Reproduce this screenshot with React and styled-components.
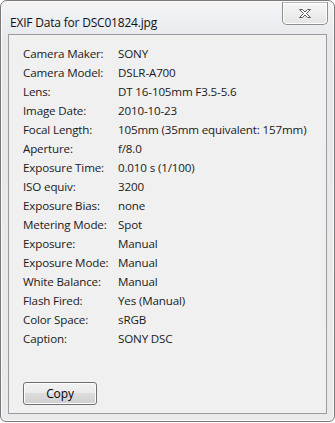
import React from 'react';
import styled, { createGlobalStyle } from 'styled-components';

const Global = createGlobalStyle`
  html, body {
    margin: 0;
    padding: 0;
    background: #ffffff;
  }
  body {
    font-family: "Segoe UI", "Open Sans", "Noto Sans", sans-serif;
    font-size: 11.6px;
    letter-spacing: -0.15px;
    color: #000;
  }
`;

const Window = styled.div`
  width: 335px;
  height: 422px;
  box-sizing: border-box;
  border: 1px solid #7a7a7a;
  border-radius: 7px 7px 6px 6px;
  background: linear-gradient(#f4f5f7, #e6e8eb 40px, #e9eaec);
  box-shadow: inset 0 0 0 1px #fbfbfb;
  display: flex;
  flex-direction: column;
  padding: 0 7px 7px 7px;
`;

const TitleBar = styled.div`
  height: 33px;
  display: flex;
  align-items: flex-start;
  flex-shrink: 0;
`;

const Title = styled.div`
  padding: 13px 0 0 2px;
  font-size: 12px;
  letter-spacing: -0.2px;
  color: #111;
`;

const CloseButton = styled.div`
  margin-left: auto;
  margin-right: -1px;
  margin-top: 1px;
  width: 46px;
  height: 23px;
  box-sizing: border-box;
  border: 1px solid #8e8e8e;
  border-top-color: #b8b8b8;
  border-radius: 0 0 5px 5px;
  background: linear-gradient(#f7f7f7, #e4e4e4);
  box-shadow: inset 0 0 0 1px #ffffff;
  display: flex;
  align-items: center;
  justify-content: center;
`;

const Client = styled.div`
  flex: 1;
  border: 1px solid #9c9c9c;
  background: #f0f0f0;
  padding: 9px 0 0 14px;
  display: flex;
  flex-direction: column;
`;

const Table = styled.div`
  display: grid;
  grid-template-columns: 95px 1fr;
  grid-auto-rows: 19px;
  align-items: center;
`;

const Label = styled.div`
  white-space: nowrap;
  color: #1a1a1a;
`;

const Value = styled.div`
  white-space: nowrap;
  color: #1a1a1a;
`;

const Footer = styled.div`
  margin-top: auto;
  padding-bottom: 8px;
`;

const Button = styled.button`
  width: 74px;
  height: 23px;
  border: 1px solid #707070;
  border-radius: 3px;
  background: linear-gradient(#f2f2f2 0%, #ebebeb 45%, #dddddd 50%, #cfcfcf 100%);
  box-shadow: inset 0 0 0 1px #fcfcfc;
  font-family: inherit;
  font-size: 12px;
  letter-spacing: -0.1px;
  color: #000;
  padding: 0;
`;

const rows = [
  ['Camera Maker:', 'SONY'],
  ['Camera Model:', 'DSLR-A700'],
  ['Lens:', 'DT 16-105mm F3.5-5.6'],
  ['Image Date:', '2010-10-23'],
  ['Focal Length:', '105mm (35mm equivalent: 157mm)'],
  ['Aperture:', 'f/8.0'],
  ['Exposure Time:', '0.010 s (1/100)'],
  ['ISO equiv:', '3200'],
  ['Exposure Bias:', 'none'],
  ['Metering Mode:', 'Spot'],
  ['Exposure:', 'Manual'],
  ['Exposure Mode:', 'Manual'],
  ['White Balance:', 'Manual'],
  ['Flash Fired:', 'Yes (Manual)'],
  ['Color Space:', 'sRGB'],
  ['Caption:', 'SONY DSC'],
];

const CloseIcon = () => (
  <svg width="14" height="11" viewBox="0 0 14 11">
    <path
      d="M1.5 1.5 H4.5 L7 4 L9.5 1.5 H12.5 L8.5 5.5 L12.5 9.5 H9.5 L7 7 L4.5 9.5 H1.5 L5.5 5.5 Z"
      fill="#ffffff"
      stroke="#5a5a5a"
      strokeWidth="1"
      strokeLinejoin="round"
    />
  </svg>
);

export default function App() {
  return (
    <>
      <Global />
      <Window>
        <TitleBar>
          <Title>EXIF Data for DSC01824.jpg</Title>
          <CloseButton>
            <CloseIcon />
          </CloseButton>
        </TitleBar>
        <Client>
          <Table>
            {rows.map(([k, v]) => (
              <React.Fragment key={k}>
                <Label>{k}</Label>
                <Value>{v}</Value>
              </React.Fragment>
            ))}
          </Table>
          <Footer>
            <Button>Copy</Button>
          </Footer>
        </Client>
      </Window>
    </>
  );
}
